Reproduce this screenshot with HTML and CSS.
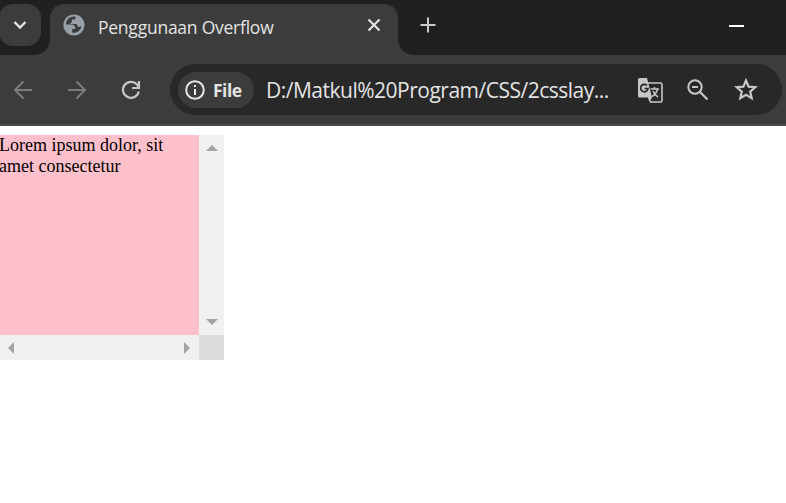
FILE: index.html
```html
<!DOCTYPE html>
<html lang="en">
<head>
<meta charset="utf-8">
<title>Penggunaan Overflow</title>
<link rel="stylesheet" href="styles.css">
</head>
<body>
<header class="browser">
  <div class="tabstrip">
    <button class="tab-search" aria-label="Search tabs">
      <svg width="14" height="10" viewBox="0 0 14 10"><path d="M1.500 2 7 7.500 12.500 2" fill="none" stroke="#e3e3e3" stroke-width="2.400"/></svg>
    </button>
    <div class="tab">
      <svg class="globe" width="24" height="24" viewBox="0 0 24 24"><circle cx="12" cy="12" r="10.600" fill="#9aa0a8"/><path fill="#3c3c3c" d="M13.500 3.900v1c0 1-.8 1.700-1.800 1.700H9.900v1.800c0 .8-.6 1.300-1.400 1.300v1.300h5.300c1 0 1.600.7 1.600 1.600v1.200h1.800c1 0 1.500-.6 2.300-.9-.8 3.800-3.600 6.700-7.600 6.900-.6 0-1.200-.1-1.700-.3v-3.400h3v-1c0-2-1.500-3.500-3.800-3.500H3.900c.1-4.400 3.700-8 8.100-8 .5 0 1 .1 1.500.2z"/></svg>
      <span class="tab-title">Penggunaan Overflow</span>
      <svg class="close" width="14" height="14" viewBox="0 0 14 14"><path d="m1.500 1.500 11 11m0-11-11 11" stroke="#e3e3e3" stroke-width="2.200"/></svg>
    </div>
    <svg class="new-tab" width="16" height="16" viewBox="0 0 16 16"><path d="M8 .5v15M.5 8h15" stroke="#c9c9c9" stroke-width="2"/></svg>
    <span class="minimize"></span>
  </div>
  <div class="toolbar">
    <svg class="back" width="20" height="20" viewBox="0 0 20 20"><path d="M19 10H2m8.500-8.500L2 10l8.500 8.500" fill="none" stroke="#7c7c7c" stroke-width="2"/></svg>
    <svg class="forward" width="20" height="20" viewBox="0 0 20 20"><path d="M1 10h17M9.500 1.500 18 10l-8.500 8.500" fill="none" stroke="#7c7c7c" stroke-width="2"/></svg>
    <svg class="reload" width="20" height="20" viewBox="0 0 20 20"><path d="M17.800 11.500A8 8 0 1 1 16 4.500l1.500 2" fill="none" stroke="#c7c7c7" stroke-width="2.200"/><path d="M18 1v7h-7" fill="none" stroke="#c7c7c7" stroke-width="2.200"/></svg>
    <div class="omnibox">
      <div class="chip">
        <svg width="20" height="20" viewBox="0 0 20 20"><circle cx="10" cy="10" r="8.800" fill="none" stroke="#e8e8e8" stroke-width="2"/><path d="M10 9v6M10 5v2" stroke="#e8e8e8" stroke-width="2"/></svg>
        <span class="chip-label">File</span>
      </div>
      <span class="url">D:/Matkul%20Program/CSS/2csslay...</span>
      <svg class="translate" width="26" height="26" viewBox="0 0 26 26"><path d="M11 6h12.500q1.500 0 1.500 1.500v16q0 1.500-1.500 1.500H13.500L11 19" fill="none" stroke="#c7c7c7" stroke-width="1.600"/><path d="M2.500 1H10l5 19.500H2.500Q1 20.500 1 19V2.500Q1 1 2.500 1zM12 20.500h3l-2.500 4z" fill="#c7c7c7"/><path d="M10 8.500a3.700 3.700 0 1 0 1 3H7.500" fill="none" stroke="#282828" stroke-width="1.700"/><path d="M13.500 12H22m-4.500-2v2m3 0c-.8 3.500-3 6-5.500 7.500m1-5.500c1 2.500 2.500 4.500 5 6" fill="none" stroke="#c7c7c7" stroke-width="1.500"/></svg>
      <svg class="zoom-out" width="22" height="22" viewBox="0 0 22 22"><circle cx="8" cy="8" r="6.700" fill="none" stroke="#c7c7c7" stroke-width="2"/><path d="M5 8h6M13 13l7.500 7.500" stroke="#c7c7c7" stroke-width="2.200"/></svg>
      <svg class="star" width="24" height="23" viewBox="0 0 24 23"><path d="m12 2.500 2.600 6.100 6.700.6-5.100 4.400 1.500 6.600-5.700-3.500-5.700 3.500 1.500-6.600-5.100-4.400 6.700-.6z" fill="none" stroke="#c7c7c7" stroke-width="2.200"/></svg>
    </div>
  </div>
</header>
<main class="page">
  <div class="scroll-box">
    <p class="content">Lorem ipsum dolor, sit<br>amet consectetur</p>
    <div class="bar vertical">
      <svg width="12" height="6" viewBox="0 0 12 6"><path d="M0 6 6 0l6 6z" fill="#a3a3a3"/></svg>
      <svg width="12" height="6" viewBox="0 0 12 6"><path d="M0 0h12L6 6z" fill="#a3a3a3"/></svg>
    </div>
    <div class="bar horizontal">
      <svg width="6" height="12" viewBox="0 0 6 12"><path d="M6 0v12L0 6z" fill="#a3a3a3"/></svg>
      <svg width="6" height="12" viewBox="0 0 6 12"><path d="M0 0v12l6-6z" fill="#a3a3a3"/></svg>
    </div>
    <div class="corner"></div>
  </div>
</main>
</body>
</html>
```
FILE: styles.css
```css
* { box-sizing: border-box; }
body { margin: 0; height: 503px; overflow: hidden; background: #fff; }
svg { display: block; flex: none; }
.browser { font-family: "Open Sans", "Noto Sans", sans-serif; color: #e3e3e3; }
.tabstrip { display: flex; height: 55px; background: #1f2120; }
.tab-search {
  display: flex; align-items: center; justify-content: center;
  width: 42px; height: 42px; margin: 4px 9px 0 -1px; padding: 0 0 1px;
  border: 0; border-radius: 14px; background: #3c3c3c;
}
.tab {
  position: relative; display: flex; align-items: center;
  width: 348px; height: 51px; margin-top: 4px; padding: 0 17px 9px 12px;
  border-radius: 14px 14px 0 0; background: #3c3c3c;
}
.tab::before, .tab::after {
  content: ""; position: absolute; bottom: 0; width: 15px; height: 15px;
}
.tab::before { left: -15px; background: radial-gradient(circle at 0 0, transparent 14.5px, #3c3c3c 15px); }
.tab::after { right: -15px; background: radial-gradient(circle at 100% 0, transparent 14.5px, #3c3c3c 15px); }
.tab-title { margin-left: 12px; font-size: 17.5px; letter-spacing: -0.24px; line-height: 24px; padding-top: 3px; white-space: nowrap; }
.close { margin-left: auto; }
.new-tab { margin: 17px 0 0 22px; }
.minimize { width: 15px; height: 2px; margin: 25px 42px 0 auto; background: #fff; }
.toolbar {
  display: flex; align-items: center; height: 71px; padding: 0 4px 0 13px;
  background: #3c3c3c; border-bottom: 2px solid #494949;
}
.forward { margin-left: 34px; }
.reload { margin-left: 34px; }
.omnibox {
  display: flex; align-items: center; width: 612px; height: 51px; margin-left: 29px;
  padding: 0 24px 0 8px; border-radius: 26px; background: #282828;
}
.chip {
  display: flex; align-items: center; width: 76px; height: 36px; padding-left: 7px;
  border-radius: 18px; background: #3c3c3c;
}
.chip-label { margin-left: 8px; font-size: 17.5px; font-weight: 700; letter-spacing: -0.5px; line-height: 24px; }
.url { width: 360px; margin-left: 12px; font-size: 21px; letter-spacing: -0.5px; line-height: 28px; white-space: nowrap; }
.translate { margin-left: 11px; }
.zoom-out { margin-left: 24px; }
.star { margin-left: auto; }
.page { padding-top: 9px; }
.scroll-box { display: grid; grid-template: 200px 25px / 199px 25px; width: 224px; }
.content {
  margin: 0 0 0 -1px; background: #ffc0cb; color: #000; white-space: nowrap;
  font: 18px/21px "Liberation Serif", "Times New Roman", serif;
}
.bar { display: flex; align-items: center; justify-content: space-between; background: #f0f0f0; }
.vertical { flex-direction: column; padding: 10px 0; }
.horizontal { padding: 0 9px 0 8px; }
.corner { background: #dcdcdc; }
```
